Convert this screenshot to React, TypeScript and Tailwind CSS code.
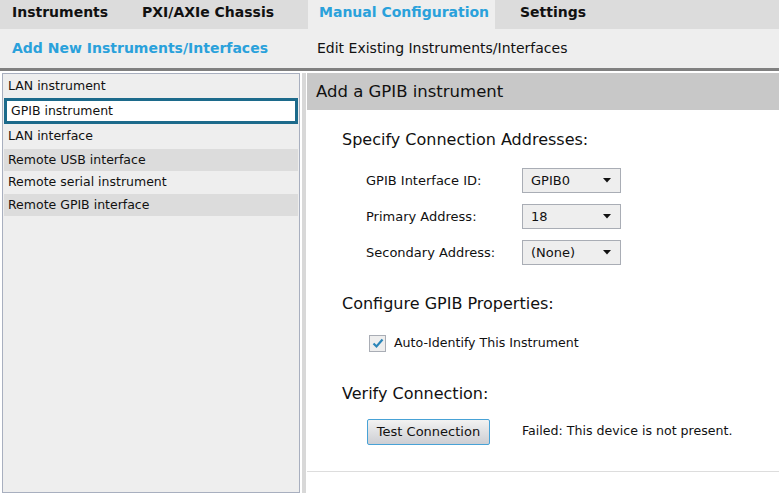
import React from 'react';

const tabs = [
  { label: 'Instruments', cls: 'w-[131px] pl-[12px]' },
  { label: 'PXI/AXIe Chassis', cls: 'w-[177px] pl-[11px]' },
  { label: 'Manual Configuration', cls: 'w-[187px] pl-[11px] bg-[#eeeeee] text-[#2aa1db]' },
  { label: 'Settings', cls: 'pl-[25px]' },
];

const listItems = [
  { label: 'LAN instrument', h: 'h-[23px]', bg: '' },
  { label: 'GPIB instrument', h: 'h-[26px]', bg: '', selected: true },
  { label: 'LAN interface', h: 'h-[25px]', bg: '' },
  { label: 'Remote USB interface', h: 'h-[22px]', bg: 'bg-[#dcdcdc]' },
  { label: 'Remote serial instrument', h: 'h-[23px]', bg: '' },
  { label: 'Remote GPIB interface', h: 'h-[22px]', bg: 'bg-[#dcdcdc]' },
];

const addressRows = [
  { label: 'GPIB Interface ID:', value: 'GPIB0' },
  { label: 'Primary Address:', value: '18' },
  { label: 'Secondary Address:', value: '(None)' },
];

const Select: React.FC<{ value: string }> = ({ value }) => (
  <div className="w-[99px] h-[25px] flex items-center justify-between pl-[8px] pr-[9px] bg-[#eeeeee] border border-[#a9adb5]">
    <span>{value}</span>
    <svg width="8" height="5" viewBox="0 0 8 5">
      <path d="M0 0 L8 0 L4 4.5 Z" fill="#111" />
    </svg>
  </div>
);

const App: React.FC = () => {
  return (
    <div className="w-[779px] h-[493px] overflow-hidden bg-white text-[#111] font-['DejaVu_Sans',sans-serif] flex flex-col">
      {/* top tabs */}
      <div className="h-[29px] shrink-0 flex bg-[#dcdcdc] text-[14px] font-bold">
        {tabs.map((t) => (
          <div key={t.label} className={`${t.cls} flex items-center pb-[4px]`}>
            {t.label}
          </div>
        ))}
      </div>

      {/* sub tabs */}
      <div className="h-[39px] shrink-0 flex items-center bg-[#eeeeee] text-[14px]">
        <div className="pl-[12px] w-[317px] font-bold text-[#2aa1db]">Add New Instruments/Interfaces</div>
        <div>Edit Existing Instruments/Interfaces</div>
      </div>
      <div className="h-[3px] shrink-0 bg-[#808080]" />
      <div className="h-[2px] shrink-0 bg-white" />

      {/* main */}
      <div className="flex-1 flex min-h-0">
        <div className="ml-[2px] w-[298px] border border-[#a8afbf] bg-[#eeeeee] p-[1px] text-[12.5px]">
          {listItems.map((item) =>
            item.selected ? (
              <div
                key={item.label}
                className={`${item.h} flex items-center px-[4px] bg-white border-[3px] border-[#1c6a8b]`}
              >
                {item.label}
              </div>
            ) : (
              <div key={item.label} className={`${item.h} flex items-center px-[4px] ${item.bg}`}>
                {item.label}
              </div>
            )
          )}
        </div>

        <div className="ml-[2px] flex-1 border-l-4 border-[#d8d8d8] pl-[1px] flex flex-col">
          <div className="h-[37px] shrink-0 flex items-center pl-[9px] pt-[2px] bg-[#c8c8c8] text-[16.5px]">
            Add a GPIB instrument
          </div>

          <div className="pl-[35px] text-[13px] border-b border-[#dddddd] pb-[26px]">
            <div className="mt-[20px] h-[20px] leading-[20px] text-[16px]">Specify Connection Addresses:</div>
            <div className="mt-[18px] pl-[24px] flex flex-col gap-[11px]">
              {addressRows.map((r) => (
                <div key={r.label} className="flex items-center">
                  <div className="w-[156px]">{r.label}</div>
                  <Select value={r.value} />
                </div>
              ))}
            </div>

            <div className="mt-[29px] h-[20px] leading-[20px] text-[16px]">Configure GPIB Properties:</div>
            <div className="mt-[20px] pl-[27px] flex items-center gap-[8px] text-[12.6px]">
              <div className="w-[17px] h-[17px] bg-[#eeeeee] border border-[#a9adb5] flex items-center justify-center">
                <svg width="12" height="11" viewBox="0 0 12 11">
                  <path d="M1.5 5.5 L4.5 8.5 L10.5 1.5" fill="none" stroke="#2b86b9" strokeWidth="2.2" />
                </svg>
              </div>
              <span>Auto-Identify This Instrument</span>
            </div>

            <div className="mt-[31px] h-[20px] leading-[20px] text-[16px]">Verify Connection:</div>
            <div className="mt-[15px] pl-[25px] flex items-center gap-[32px]">
              <button className="w-[123px] h-[26px] rounded-[2px] border border-[#48a2d6] bg-gradient-to-b from-[#f2f2f2] to-[#cdced3] text-[13px] text-[#111]">
                Test Connection
              </button>
              <span className="text-[12.6px]">Failed: This device is not present.</span>
            </div>
          </div>
        </div>
      </div>
    </div>
  );
};

export default App;
